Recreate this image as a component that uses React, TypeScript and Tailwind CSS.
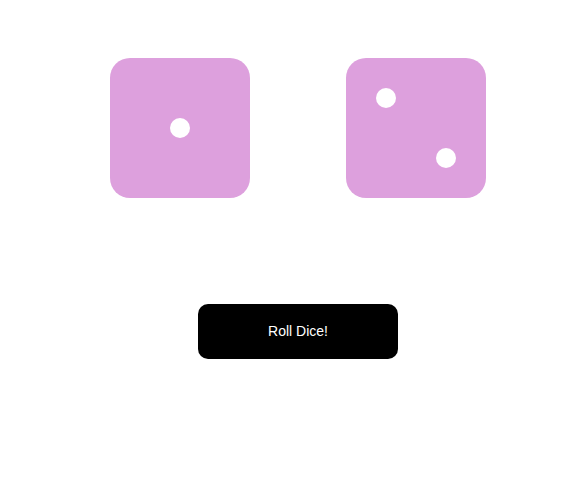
import { useState } from 'react';

type Pip = [number, number];

const PIPS: Record<number, Pip[]> = {
  1: [[70, 70]],
  2: [[40, 40], [100, 100]],
  3: [[40, 40], [70, 70], [100, 100]],
  4: [[40, 40], [100, 40], [40, 100], [100, 100]],
  5: [[40, 40], [100, 40], [70, 70], [40, 100], [100, 100]],
  6: [[40, 40], [100, 40], [40, 70], [100, 70], [40, 100], [100, 100]],
};

function Die({ value }: { value: number }) {
  return (
    <div className="relative w-[140px] h-[140px] rounded-[20px] bg-[#dda0dd] shrink-0">
      {PIPS[value].map(([x, y], i) => (
        <span
          key={i}
          className="absolute w-[20px] h-[20px] rounded-full bg-white"
          style={{ left: x - 10, top: y - 10 }}
        />
      ))}
    </div>
  );
}

export default function App() {
  const [dice, setDice] = useState([1, 2]);

  const roll = () => {
    setDice([1 + Math.floor(Math.random() * 6), 1 + Math.floor(Math.random() * 6)]);
  };

  return (
    <div className="w-full min-h-[484px] bg-white font-['Liberation_Sans',Arial,sans-serif] pl-[8px]">
      <div className="flex justify-center gap-[96px] pt-[58px]">
        {dice.map((v, i) => (
          <Die key={i} value={v} />
        ))}
      </div>
      <div className="flex justify-center mt-[106px]">
        <button
          onClick={roll}
          className="w-[200px] h-[55px] rounded-[10px] bg-black text-white text-[14px]"
        >
          Roll Dice!
        </button>
      </div>
    </div>
  );
}
